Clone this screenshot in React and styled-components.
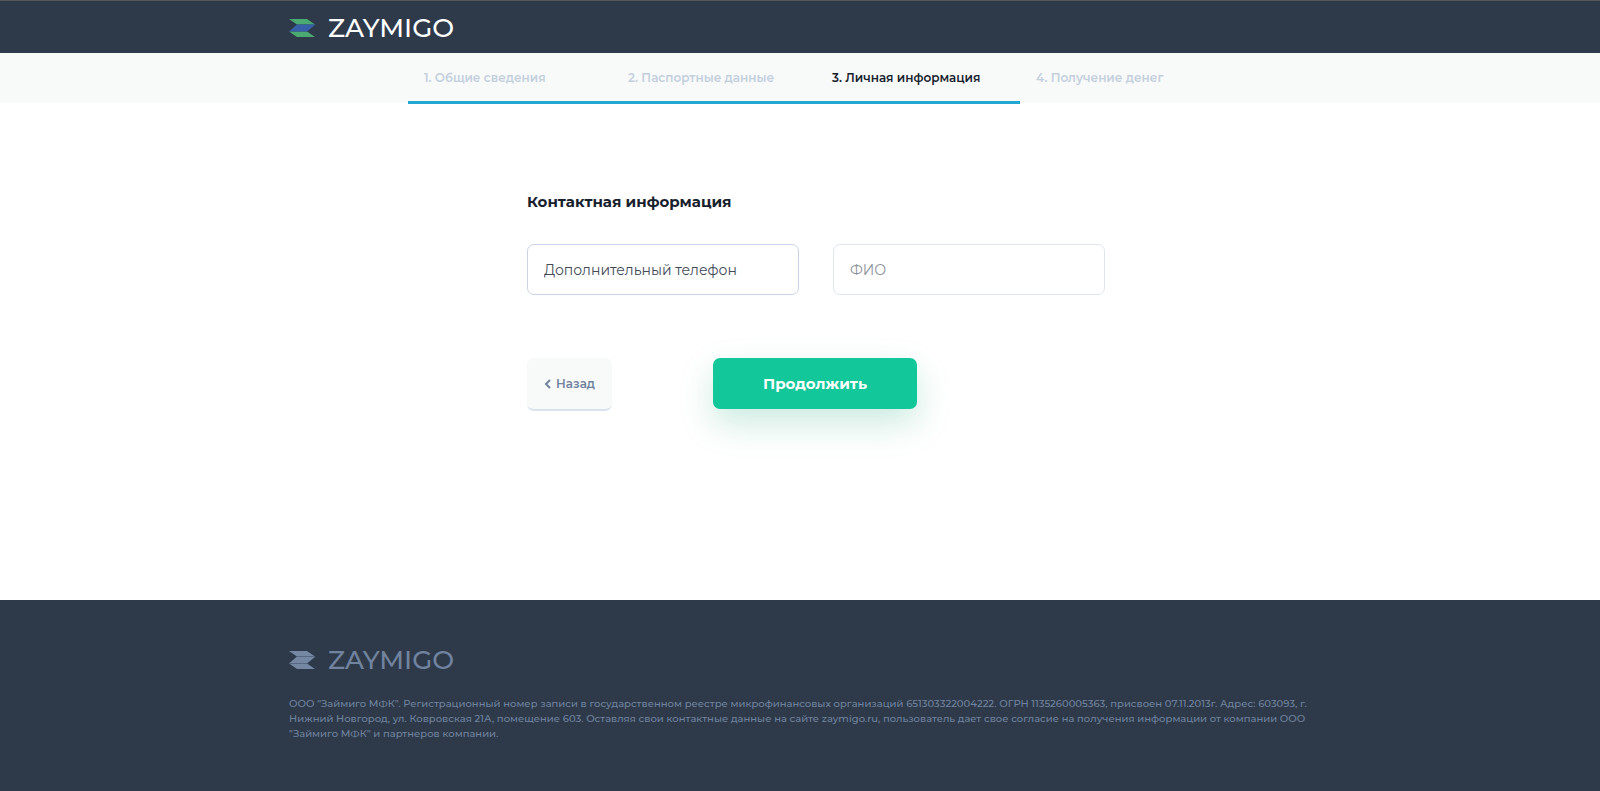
import React, { useState } from "react";
import styled, { createGlobalStyle } from "styled-components";

const steps = [
  "1. Общие сведения",
  "2. Паспортные данные",
  "3. Личная информация",
  "4. Получение денег",
];

const Logo = ({ muted }) => (
  <LogoLink href="#" $muted={muted}>
    <svg width="27" height="18" viewBox="0 0 27 18" aria-hidden="true">
      <path d="M0 0H18L26 5.500H8Z" fill={muted ? "#7488a4" : "#4aaa72"} />
      <path d="M0 12.500H18L26 18H8Z" fill={muted ? "#7488a4" : "#4aaa72"} />
      <path d="M8 5.500H26.500L18 12.500H0Z" fill={muted ? "#7488a4" : "#3860a8"} />
      {muted && <path d="M8 5.500H26M0 12.500H18" stroke="#56677f" />}
    </svg>
    ZAYMIGO
  </LogoLink>
);

const App = () => {
  const [phone, setPhone] = useState("Дополнительный телефон");
  const [name, setName] = useState("");
  const current = 2;

  return (
    <Page>
      <GlobalStyle />

      {/* Header */}
      <Header>
        <Container>
          <Logo />
        </Container>
      </Header>

      {/* Steps */}
      <StepsBar>
        <Container>
          <Steps>
            {steps.map((step, i) => (
              <Step
                key={step}
                $done={i <= current}
                $active={i === current}
                aria-current={i === current ? "step" : undefined}
              >
                {step}
              </Step>
            ))}
          </Steps>
        </Container>
      </StepsBar>

      {/* Form */}
      <Main>
        <Container>
          <Form onSubmit={(e) => e.preventDefault()}>
            <Title>Контактная информация</Title>
            <Fields>
              <Input
                type="text"
                aria-label="Дополнительный телефон"
                value={phone}
                onChange={(e) => setPhone(e.target.value)}
                $filled={phone !== ""}
              />
              <Input
                type="text"
                aria-label="ФИО"
                placeholder="ФИО"
                value={name}
                onChange={(e) => setName(e.target.value)}
                $filled={name !== ""}
              />
            </Fields>
            <Actions>
              <BackButton type="button">
                <svg width="7" height="10" viewBox="0 0 7 10" aria-hidden="true">
                  <path d="M6 1L2 5L6 9" fill="none" stroke="currentColor" strokeWidth="2" />
                </svg>
                Назад
              </BackButton>
              <SubmitButton type="submit">Продолжить</SubmitButton>
            </Actions>
          </Form>
        </Container>
      </Main>

      {/* Footer */}
      <Footer>
        <Container>
          <Logo muted />
          <Legal>
            ООО "Займиго МФК". Регистрационный номер записи в государственном
            реестре микрофинансовых организаций 651303322004222. ОГРН
            1135260005363, присвоен 07.11.2013г. Адрес: 603093, г. Нижний
            Новгород, ул. Ковровская 21А, помещение 603. Оставляя свои
            контактные данные на сайте zaymigo.ru, пользователь дает свое
            согласие на получения информации от компании ООО "Займиго МФК" и
            партнеров компании.
          </Legal>
        </Container>
      </Footer>
    </Page>
  );
};

export default App;

// Styled Components
const GlobalStyle = createGlobalStyle`
  * {
    box-sizing: border-box;
  }

  body {
    margin: 0;
    background: #fff;
    color: #17212d;
    font-family: Montserrat, Inter, "Open Sans", sans-serif;
  }

  button, input {
    font-family: inherit;
  }
`;

const Page = styled.div`
  display: flex;
  flex-direction: column;
  min-height: 100vh;
`;

const Container = styled.div`
  width: 100%;
  max-width: 1054px;
  margin: 0 auto;
  padding: 0 16px;
`;

const Header = styled.header`
  display: flex;
  align-items: center;
  height: 53px;
  padding-top: 2px;
  border-top: 1px solid #55565a;
  background: #2e3a4a;
`;

const LogoLink = styled.a`
  display: inline-flex;
  align-items: center;
  gap: 12px;
  color: ${({ $muted }) => ($muted ? "#71839e" : "#fff")};
  font-size: 26px;
  line-height: 24px;
  font-weight: 500;
  text-decoration: none;
`;

const StepsBar = styled.nav`
  height: 50px;
  background: #f8faf9;
`;

const Steps = styled.ol`
  display: flex;
  max-width: 816px;
  height: 51px;
  margin: 0 0 0 119px;
  padding: 0;
  list-style: none;

  @media (max-width: 900px) {
    margin-left: 0;
  }
`;

const Step = styled.li`
  flex: 1;
  padding: 17px 0 0 16px;
  border-bottom: 3px solid ${({ $done }) => ($done ? "#22a7d3" : "transparent")};
  color: ${({ $active }) => ($active ? "#17212d" : "#c4cfde")};
  font-size: 12px;
  line-height: 16px;
  font-weight: 600;
`;

const Main = styled.main`
  flex: 1;
  padding: 87px 0 64px;
`;

const Form = styled.form`
  margin-left: 238px;

  @media (max-width: 900px) {
    margin-left: 0;
  }
`;

const Title = styled.h1`
  margin: 0 0 30px;
  font-size: 15px;
  line-height: 24px;
  font-weight: 700;
`;

const Fields = styled.div`
  display: flex;
  flex-wrap: wrap;
  gap: 34px;
`;

const Input = styled.input`
  width: 272px;
  height: 51px;
  padding: 0 16px;
  border: 1px solid ${({ $filled }) => ($filled ? "#c9d4e4" : "#dfe6f0")};
  border-radius: 7px;
  outline: none;
  background: #fff;
  color: #414a56;
  font-size: 14px;

  &::placeholder {
    color: #8b929b;
    opacity: 1;
  }

  &:focus {
    border-color: #22a7d3;
  }
`;

const Actions = styled.div`
  display: flex;
  gap: 101px;
  margin-top: 63px;
`;

const BackButton = styled.button`
  display: flex;
  align-items: center;
  justify-content: center;
  gap: 5px;
  width: 85px;
  height: 53px;
  padding: 0;
  border: none;
  border-bottom: 2px solid #dae2ed;
  border-radius: 7px;
  background: #f8faf9;
  color: #71839e;
  font-size: 12px;
  font-weight: 600;
  cursor: pointer;
`;

const SubmitButton = styled.button`
  width: 204px;
  height: 51px;
  border: none;
  border-radius: 7px;
  background: #12c799;
  box-shadow: 0 14px 34px rgba(20, 160, 120, 0.22);
  color: #fff;
  font-size: 15px;
  font-weight: 700;
  cursor: pointer;

  &:hover {
    background: #10b88d;
  }
`;

const Footer = styled.footer`
  min-height: 191px;
  padding: 48px 0;
  background: #2e3a4a;
`;

const Legal = styled.p`
  margin: 23px 0 0;
  color: #71839e;
  font-size: 10px;
  line-height: 15px;
  font-weight: 500;
`;
